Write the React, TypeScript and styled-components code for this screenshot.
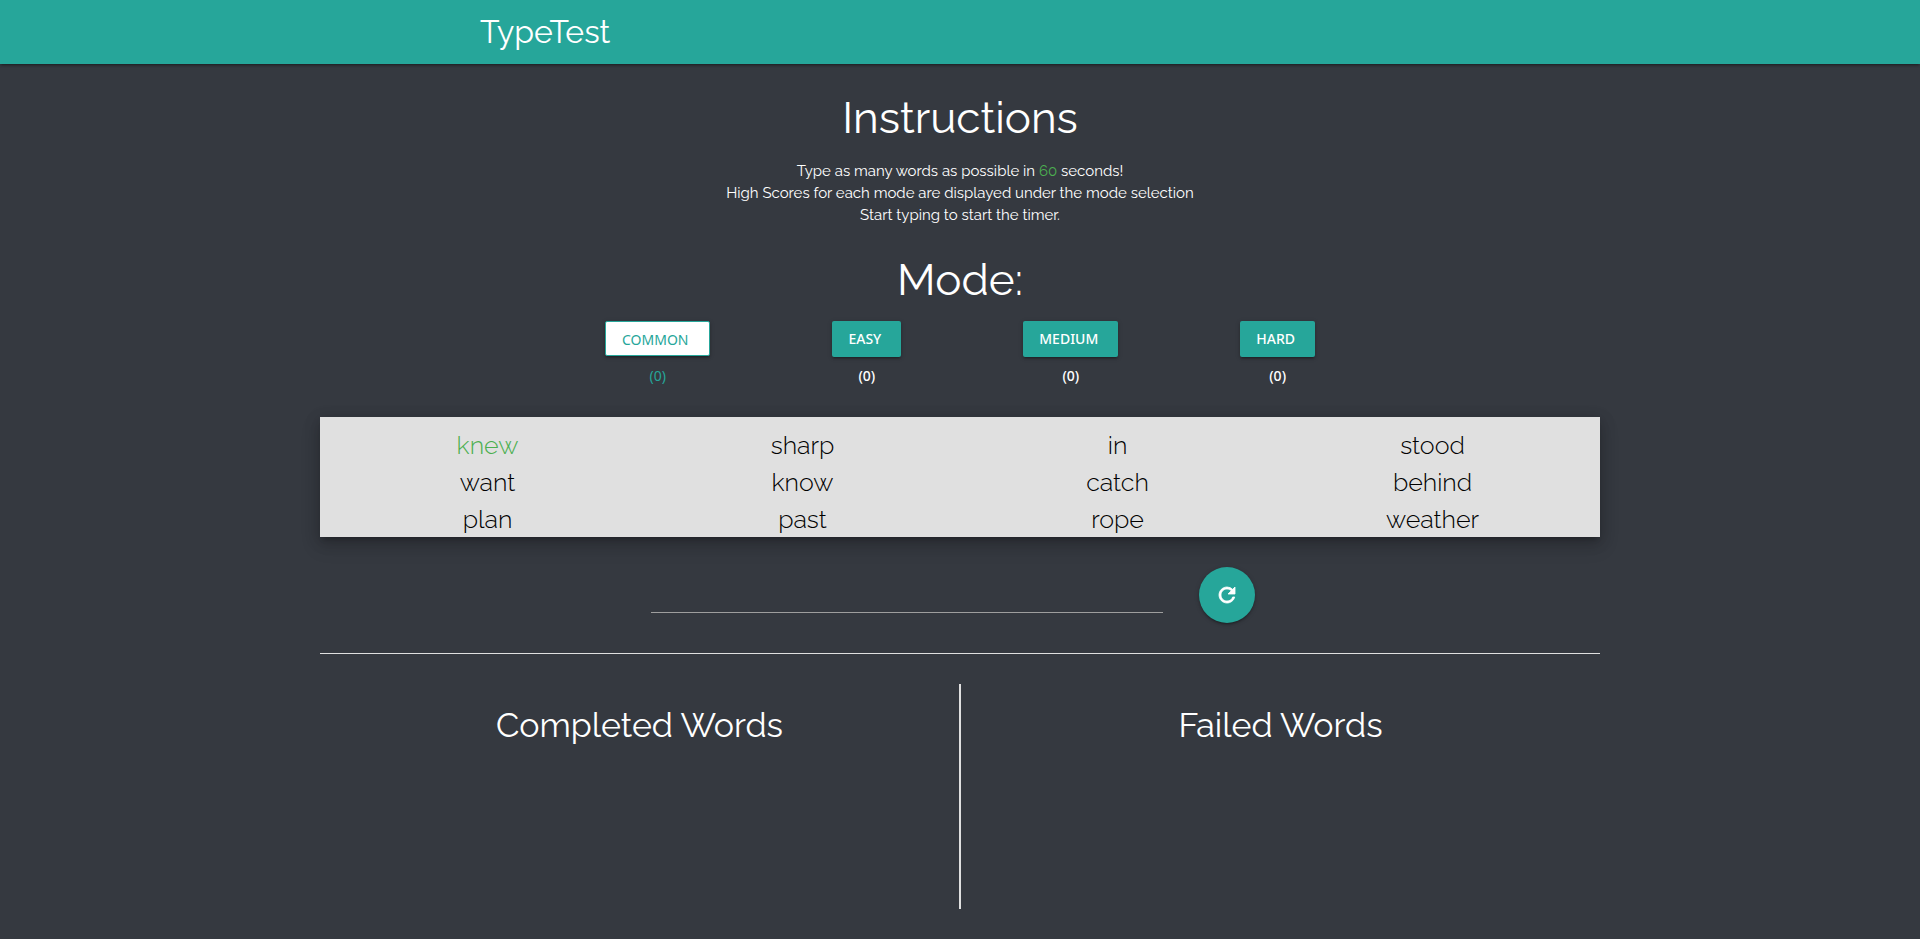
import React, { useState } from "react";
import styled, { createGlobalStyle } from "styled-components";

const teal = "#26a69a";
const green = "#4caf50";
const liftShadow =
  "0 2px 2px 0 rgba(0,0,0,.14), 0 3px 1px -2px rgba(0,0,0,.12), 0 1px 5px 0 rgba(0,0,0,.2)";

const GlobalStyle = createGlobalStyle`
  *, *::before, *::after { box-sizing: border-box; }
  body {
    margin: 0;
    background: #353940;
    color: #fff;
    font-family: Raleway, Lato, sans-serif;
    font-size: 15px;
    line-height: 22px;
  }
`;

const NavBar = styled.nav`
  height: 64px;
  padding: 0 25%;
  background: ${teal};
  box-shadow: ${liftShadow};
`;

const Brand = styled.a`
  color: #fff;
  font-size: 32px;
  line-height: 64px;
  text-decoration: none;
`;

const Container = styled.main`
  width: 90%;
  max-width: 1280px;
  margin: 0 auto;
  text-align: center;
`;

const SectionTitle = styled.h3`
  margin: 0;
  padding: 30px 0 17px;
  font-size: 44px;
  line-height: 48px;
  font-weight: 400;
`;

const Instructions = styled.p`
  margin: 0;
  padding-top: 1px;
`;

const Seconds = styled.span`
  color: ${green};
`;

const ModeRow = styled.div`
  display: flex;
  justify-content: space-around;
  width: 65%;
  height: 66px;
  margin: 0 auto 30px;
`;

const Mode = styled.div<{ $active: boolean }>`
  display: flex;
  flex-direction: column;
  align-items: center;
  gap: ${(p) => (p.$active ? "9px" : "8px")};
  color: ${(p) => (p.$active ? teal : "#fff")};
  font-family: "Noto Sans", sans-serif;
  font-size: 14px;
  font-weight: ${(p) => (p.$active ? 400 : 500)};
`;

const ModeButton = styled.button<{ $active: boolean }>`
  height: 36px;
  padding: ${(p) => (p.$active ? "2px 21px 0 16px" : "0 20px 0 16px")};
  border: ${(p) => (p.$active ? `1px solid ${teal}` : "0")};
  border-radius: 2px;
  background: ${(p) => (p.$active ? "#fff" : teal)};
  color: inherit;
  font: inherit;
  text-transform: uppercase;
  box-shadow: ${liftShadow};
  cursor: pointer;
`;

const WordPanel = styled.section`
  display: grid;
  grid-template-columns: repeat(4, 1fr);
  padding: 10px 10px 0;
  height: 120px;
  background: #e0e0e0;
  color: #000;
  font-size: 25px;
  font-weight: 300;
  line-height: 37px;
  box-shadow: 0 8px 17px 2px rgba(0,0,0,.14), 0 3px 14px 2px rgba(0,0,0,.12),
    0 5px 5px -3px rgba(0,0,0,.2);
`;

const Word = styled.span<{ $current: boolean }>`
  height: 37px;
  color: ${(p) => (p.$current ? green : "inherit")};
`;

const EntryRow = styled.form`
  display: flex;
  gap: 36px;
  padding-top: 30px;
`;

const EntryInput = styled.input`
  width: 40%;
  height: 46px;
  margin-left: calc(25% + 11px);
  padding: 0;
  border: 0;
  border-bottom: 1px solid #9e9e9e;
  outline: none;
  background: transparent;
  color: #fff;
  font: inherit;
  text-align: center;
`;

const ResetButton = styled.button`
  display: flex;
  align-items: center;
  justify-content: center;
  width: 56px;
  height: 56px;
  padding: 0;
  border: 0;
  border-radius: 50%;
  background: ${teal};
  color: #fff;
  box-shadow: ${liftShadow};
  cursor: pointer;
`;

const Divider = styled.hr`
  height: 1px;
  margin: 30px 0;
  border: 0;
  background: #e0e0e0;
`;

const Results = styled.section`
  display: grid;
  grid-template-columns: 1fr 2px 1fr;
  min-height: 225px;
`;

const ResultLine = styled.div`
  background: #e0e0e0;
`;

const ResultTitle = styled.h4`
  margin: 22px 0 0;
  font-size: 34px;
  line-height: 38px;
  font-weight: 400;
`;

const modes = ["Common", "Easy", "Medium", "Hard"];
const words = [
  "knew", "sharp", "in", "stood",
  "want", "know", "catch", "behind",
  "plan", "past", "rope", "weather",
];

export default function App() {
  const [mode, setMode] = useState("Common");
  const [entry, setEntry] = useState("");

  return (
    <>
      <GlobalStyle />
      <NavBar>
        <Brand href="#">TypeTest</Brand>
      </NavBar>
      <Container>
        <SectionTitle>Instructions</SectionTitle>
        <Instructions>
          Type as many words as possible in <Seconds>60</Seconds> seconds!
          <br />
          High Scores for each mode are displayed under the mode selection
          <br />
          Start typing to start the timer.
        </Instructions>
        <SectionTitle>Mode:</SectionTitle>
        <ModeRow>
          {modes.map((name) => (
            <Mode key={name} $active={name === mode}>
              <ModeButton
                type="button"
                $active={name === mode}
                aria-pressed={name === mode}
                onClick={() => setMode(name)}
              >
                {name}
              </ModeButton>
              <span>(0)</span>
            </Mode>
          ))}
        </ModeRow>
        <WordPanel>
          {words.map((word, i) => (
            <Word key={word} $current={i === 0}>
              {word}
            </Word>
          ))}
        </WordPanel>
        <EntryRow onSubmit={(e) => e.preventDefault()}>
          <EntryInput
            aria-label="Type the highlighted word"
            value={entry}
            onChange={(e) => setEntry(e.target.value)}
          />
          <ResetButton type="button" aria-label="Restart" onClick={() => setEntry("")}>
            <svg
              width="24"
              height="24"
              viewBox="0 0 24 24"
              fill="currentColor"
              stroke="currentColor"
              strokeWidth="0.8"
              aria-hidden="true"
            >
              <path d="M17.65 6.35A7.958 7.958 0 0 0 12 4c-4.42 0-7.99 3.58-7.99 8s3.57 8 7.99 8c3.73 0 6.84-2.55 7.73-6h-2.08A5.99 5.99 0 0 1 12 18c-3.31 0-6-2.69-6-6s2.69-6 6-6c1.66 0 3.14.69 4.22 1.78L13 11h7V4l-2.35 2.35z" />
            </svg>
          </ResetButton>
        </EntryRow>
        <Divider />
        <Results>
          <ResultTitle>Completed Words</ResultTitle>
          <ResultLine />
          <ResultTitle>Failed Words</ResultTitle>
        </Results>
      </Container>
    </>
  );
}
